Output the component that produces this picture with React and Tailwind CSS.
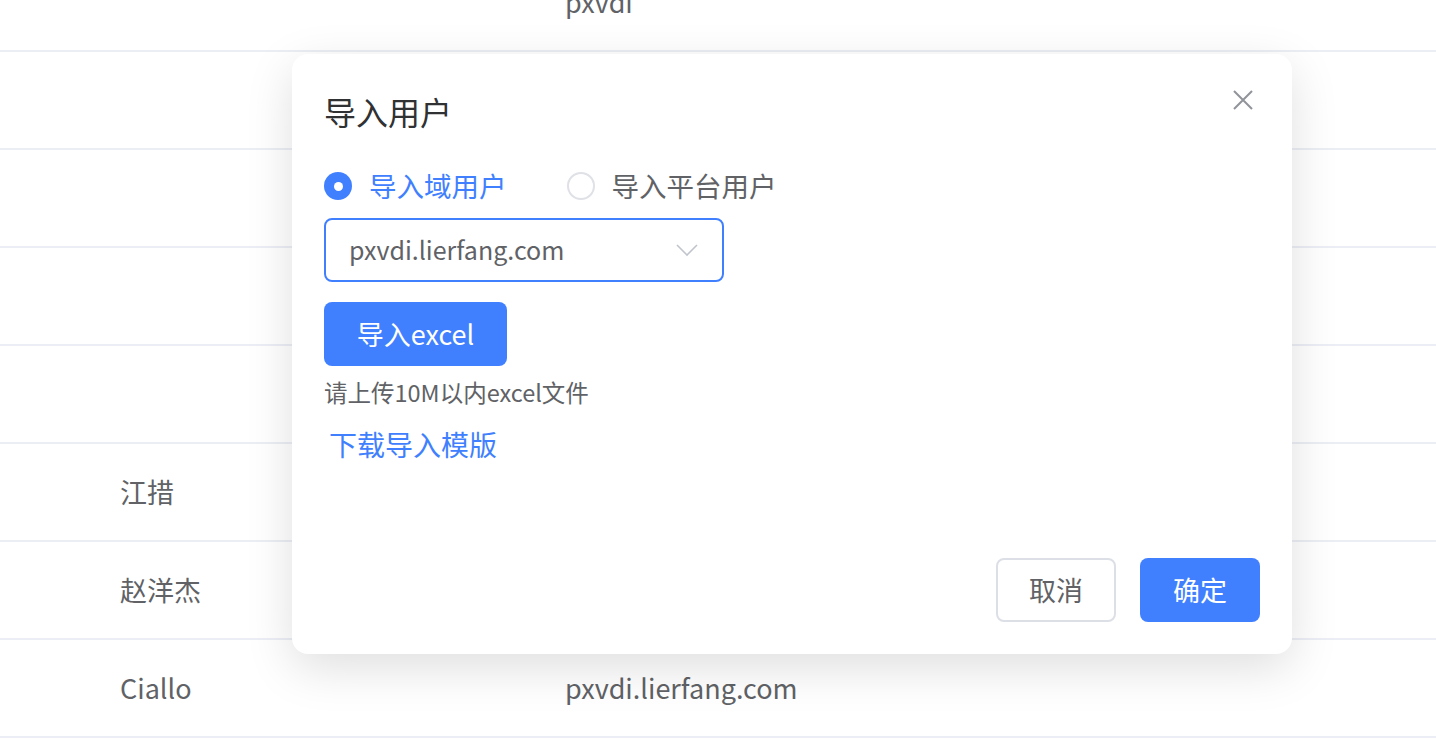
const rows = [
  { name: '', domain: 'pxvdi' },
  { name: '', domain: '' },
  { name: '', domain: '' },
  { name: '', domain: '' },
  { name: '', domain: '' },
  { name: '江措', domain: '' },
  { name: '赵洋杰', domain: '' },
  { name: 'Ciallo', domain: 'pxvdi.lierfang.com' },
  { name: '', domain: '' },
];

function Radio({ checked, label }) {
  return (
    <label className="flex items-center gap-[17px] cursor-pointer">
      {checked ? (
        <span className="w-[28px] h-[28px] rounded-full bg-[#4080ff] flex items-center justify-center">
          <span className="w-[9px] h-[9px] rounded-full bg-white" />
        </span>
      ) : (
        <span className="w-[28px] h-[28px] rounded-full border-2 border-[#dfe1e6] bg-white" />
      )}
      <span className={checked ? 'text-[#4080ff]' : 'text-[#606266]'}>{label}</span>
    </label>
  );
}

export default function App() {
  const font = { fontFamily: '"Noto Sans CJK SC", "Noto Sans", sans-serif' };

  return (
    <div className="relative w-full h-screen overflow-hidden bg-white" style={font}>
      <div className="-mt-[46px]">
        {rows.map((r, i) => (
          <div key={i} className="flex items-center h-[98px] border-b-2 border-[#ebeef5] text-[27px] text-[#606266]">
            <div className="w-[565px] pl-[120px]">{r.name}</div>
            <div>{r.domain}</div>
          </div>
        ))}
      </div>

      <div className="absolute left-[292px] top-[54px] w-[1000px] h-[600px] bg-white rounded-[16px] shadow-[0_14px_48px_rgba(0,0,0,0.13)] flex flex-col px-[32px] pt-[36px] pb-[32px]">
        <button className="absolute right-[38px] top-[35px] text-[#909399]">
          <svg width="22" height="22" viewBox="0 0 22 22" fill="none" stroke="currentColor" strokeWidth="2">
            <path d="M2 2L20 20M20 2L2 20" />
          </svg>
        </button>

        <h2 className="text-[32px] leading-[42px] text-[#303133]">导入用户</h2>

        <div className="mt-[34px] h-[40px] flex items-center gap-[60px] text-[27.5px]">
          <Radio checked label="导入域用户" />
          <Radio label="导入平台用户" />
        </div>

        <div className="mt-[12px] w-[400px] h-[64px] border-2 border-[#4080ff] rounded-[8px] flex items-center justify-between pl-[23px] pr-[24px]">
          <span className="text-[25px] text-[#606266]">pxvdi.lierfang.com</span>
          <svg width="22" height="14" viewBox="0 0 22 14" fill="none" stroke="#c0c4cc" strokeWidth="1.6">
            <path d="M1 2L11 12L21 2" />
          </svg>
        </div>

        <button className="mt-[20px] w-[183px] h-[64px] rounded-[8px] bg-[#4080ff] text-white text-[27px]">
          导入excel
        </button>

        <p className="mt-[11px] text-[23.5px] leading-[30px] text-[#606266]">请上传10M以内excel文件</p>

        <a className="mt-[19px] ml-[5px] text-[28px] leading-[36px] text-[#4080ff] cursor-pointer">下载导入模版</a>

        <div className="mt-auto flex justify-end gap-[24px]">
          <button className="w-[120px] h-[64px] rounded-[8px] border-2 border-[#dcdfe6] bg-white text-[27px] text-[#606266]">
            取消
          </button>
          <button className="w-[120px] h-[64px] rounded-[8px] bg-[#4080ff] text-white text-[27px]">
            确定
          </button>
        </div>
      </div>
    </div>
  );
}
